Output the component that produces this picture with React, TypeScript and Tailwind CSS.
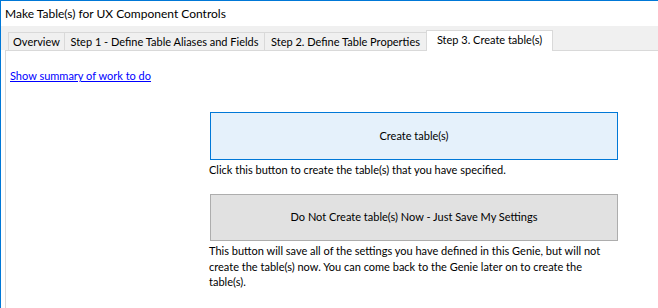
export default function App() {
  const font = { fontFamily: 'Lato, "Noto Sans", sans-serif' };
  return (
    <div
      className="flex h-[308px] w-[658px] flex-col overflow-hidden border-l border-t border-[#0078d7] bg-white text-[11px] text-black"
      style={font}
    >
      <div className="flex h-[25px] shrink-0 items-center whitespace-nowrap pl-[4px] text-[12px] leading-none">
        Make Table(s) for UX Component Controls
      </div>
      <div className="flex h-[24px] shrink-0 items-end whitespace-nowrap bg-[#f0f0f0] pl-[7px]">
        <div className="flex h-[18px] w-[56px] items-center justify-center border-l border-t border-[#d9d9d9] leading-none">
          Overview
        </div>
        <div className="flex h-[18px] w-[200px] items-center justify-center border-l border-t border-[#d9d9d9] leading-none">
          Step 1 - Define Table Aliases and Fields
        </div>
        <div className="flex h-[18px] w-[162px] items-center justify-center border-l border-t border-[#d9d9d9] leading-none">
          Step 2. Define Table Properties
        </div>
        <div className="relative z-10 -mb-px flex h-[21px] w-[127px] items-center justify-center border-l border-r border-t border-[#d9d9d9] bg-white pb-[3px] leading-none">
          Step 3. Create table(s)
        </div>
      </div>
      <div className="ml-[4px] flex flex-1 flex-col border-l border-t border-[#d9d9d9] bg-white pl-[4px] pt-[17px]">
        <a href="#" className="self-start leading-[16px] text-[#0000ff] underline">
          Show summary of work to do
        </a>
        <div className="ml-[200px] mt-[28px] flex w-[409px] flex-col">
          <button className="flex h-[48px] w-[408px] items-center justify-center border border-[#0078d7] bg-[#e5f1fb] text-[11px]">
            Create table(s)
          </button>
          <p className="-ml-px mt-[2px] leading-[16px]">
            Click this button to create the table(s) that you have specified.
          </p>
          <button className="mt-[16px] flex h-[47px] w-[408px] items-center justify-center border border-[#adadad] bg-[#e1e1e1] text-[11px]">
            Do Not Create table(s) Now - Just Save My Settings
          </button>
          <p className="-ml-px mt-[2px] w-[410px] leading-[15.5px]">
            This button will save all of the settings you have defined in this Genie, but will not create the table(s) now. You can come back to the Genie later on to create the table(s).
          </p>
        </div>
      </div>
    </div>
  );
}
